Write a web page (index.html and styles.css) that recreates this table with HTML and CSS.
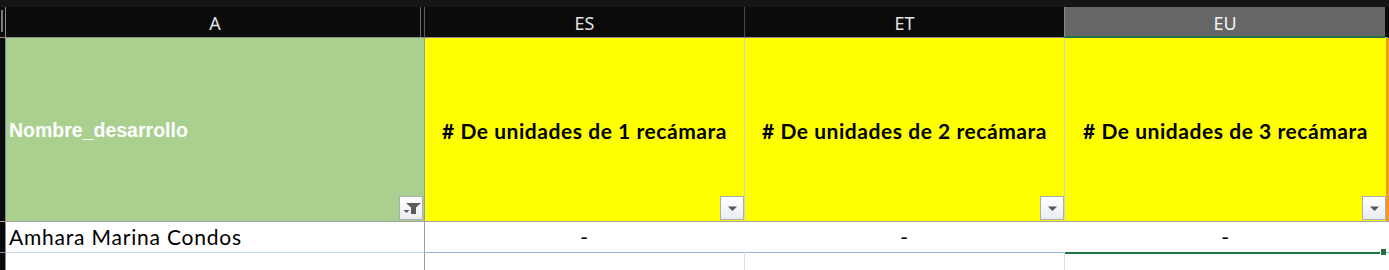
FILE: index.html
```html
<!DOCTYPE html>
<html>
<head>
<meta charset="utf-8">
<link rel="stylesheet" href="styles.css">
</head>
<body>
<div class="topbar"></div>
<div class="sheet">
  <div class="row hdr">
    <div class="c stub"><span class="grip"></span></div>
    <div class="c colA frz">A</div>
    <div class="c col">ES</div>
    <div class="c col">ET</div>
    <div class="c col sel">EU</div>
    <div class="c edge dark"></div>
  </div>
  <div class="row r1">
    <div class="c stub"></div>
    <div class="c colA green"><span class="ntext">Nombre_desarrollo</span>
      <span class="fbtn"><svg width="22" height="22" viewBox="0 0 22 22"><path d="M6 6h15l-5 4.5v6.5h-5v-6.5z" fill="#5a5a5a"/><path d="M3.5 13h6l-3 3z" fill="#5a5a5a"/></svg></span>
    </div>
    <div class="c col yellow">
      <span class="htext"># De unidades de 1 recámara</span>
      <span class="fbtn"><svg width="22" height="22" viewBox="0 0 22 22"><path d="M7 9.5h9l-4.5 4.5z" fill="#555"/></svg></span>
    </div>
    <div class="c col yellow">
      <span class="htext"># De unidades de 2 recámara</span>
      <span class="fbtn"><svg width="22" height="22" viewBox="0 0 22 22"><path d="M7 9.5h9l-4.5 4.5z" fill="#555"/></svg></span>
    </div>
    <div class="c col yellow">
      <span class="htext"># De unidades de 3 recámara</span>
      <span class="fbtn"><svg width="22" height="22" viewBox="0 0 22 22"><path d="M7 9.5h9l-4.5 4.5z" fill="#555"/></svg></span>
    </div>
    <div class="c edge orange"></div>
  </div>
  <div class="row r2">
    <div class="c stub"></div>
    <div class="c colA data">Amhara Marina Condos</div>
    <div class="c col data ctr">-</div>
    <div class="c col data ctr">-</div>
    <div class="c col data ctr active">-<span class="handle"></span></div>
    <div class="c edge white"></div>
  </div>
  <div class="row r3">
    <div class="c stub"></div>
    <div class="c colA"></div>
    <div class="c col"></div>
    <div class="c col"></div>
    <div class="c col"></div>
    <div class="c edge white"></div>
  </div>
</div>
</body>
</html>
```
FILE: styles.css
```css
html, body { margin: 0; padding: 0; background: #ffffff; }
body { width: 1389px; height: 270px; overflow: hidden; }
.topbar { height: 7px; background: #171414; }
.sheet { display: flex; flex-direction: column; }
.row { display: flex; }
.c { box-sizing: border-box; position: relative; }
.stub { width: 6px; border-right: 1px solid #8c8c8c; background: #0b0b0b; }
.colA { width: 419px; border-right: 1px solid #9a9a9a; }
.col { width: 320px; border-right: 1px solid #d4d4d4; }
.row .col:nth-child(5) { width: 321px; border-right: none; }
.edge { width: 3px; }
.dark { background: #0b0b0b; }
.orange { background: #f29a1e; }
.white { background: #fff; }

.hdr { height: 31px; background: #0b0b0b; }
.hdr .c { border-bottom: 1px solid #8e8e8e; display: flex; align-items: center; justify-content: center;
  font-family: "Noto Sans", "Open Sans", sans-serif; font-size: 18px; color: #e2e2e2; padding-top: 2px; }
.hdr .stub { border-bottom: 1px solid #8e8e8e; }
.grip { position: absolute; left: 1px; top: 3px; width: 2px; height: 22px; background: #7a7a7a; }
.hdr .colA { border-right: 1px solid #5c5c5c; box-shadow: inset -3px 0 0 #0b0b0b, inset -4px 0 0 #6a6a6a; }
.hdr .col { border-right: 1px solid #4a4a4a; }
.hdr .sel { background: #666666; color: #f4f4f4; border-bottom: 2px solid #217346; border-left: 1px solid #8a8a8a; margin-left: -1px; width: 322px; }

.r1 { height: 184px; }
.r1 .c { border-bottom: 1px solid #a2a2a2; }
.r1 .stub { background: #0b0b0b; }
.green { background: #a9d08e; display: flex; align-items: center; }
.yellow { background: #ffff00; display: flex; align-items: center; justify-content: center; }
.ntext { font-family: "Liberation Sans", Arial, sans-serif; font-weight: bold; font-size: 19.5px; color: #ffffff; padding-left: 3px; margin-top: 1px; }
.htext { font-family: Lato, "Open Sans", sans-serif; font-weight: bold; font-size: 21px; color: #000; letter-spacing: 0.55px; margin-top: 1px; }
.fbtn { position: absolute; right: 1px; bottom: 1px; width: 22px; height: 22px; border: 1px solid #a9aeb8;
  background: linear-gradient(#ffffff, #e9ecf2); display: block; }
.fbtn svg { display: block; }
.r1 .col .fbtn { right: 0; }

.r2 { height: 31px; }
.r2 .c { border-bottom: 1px solid #8eb4e3; }
.r2 .colA { border-bottom-color: #c5d9f1; }
.r2 .col { border-right-color: transparent; }
.r2 .stub { border-bottom: 1px solid #8c8c8c; }
.data { font-family: Lato, "Open Sans", sans-serif; font-size: 21px; letter-spacing: 0.8px; color: #000; line-height: 30px; padding-left: 3px; }
.ctr { text-align: center; padding-left: 0; }
.active { border-bottom: 2px solid #217346 !important; margin-bottom: -1px; }
.handle { position: absolute; right: -2px; bottom: -4px; width: 6px; height: 6px; background: #217346; border: 1px solid #fff; }

.r3 { height: 20px; }
.r3 .colA { border-right-color: #9a9a9a; }
.r3 .col { border-right-color: #dcdcdc; }
```
